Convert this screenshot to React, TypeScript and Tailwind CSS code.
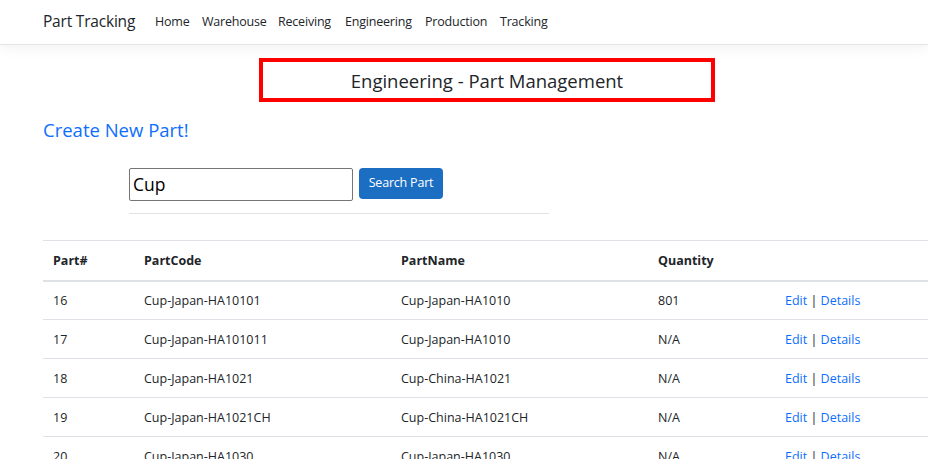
import React from "react";

const rows = [
  { id: "16", code: "Cup-Japan-HA10101", name: "Cup-Japan-HA1010", qty: "801" },
  { id: "17", code: "Cup-Japan-HA101011", name: "Cup-Japan-HA1010", qty: "N/A" },
  { id: "18", code: "Cup-Japan-HA1021", name: "Cup-China-HA1021", qty: "N/A" },
  { id: "19", code: "Cup-Japan-HA1021CH", name: "Cup-China-HA1021CH", qty: "N/A" },
  { id: "20", code: "Cup-Japan-HA1030", name: "Cup-Japan-HA1030", qty: "N/A" },
];

const navLinks = [
  { label: "Home", w: "w-[47px]" },
  { label: "Warehouse", w: "w-[76px]" },
  { label: "Receiving", w: "w-[67px]" },
  { label: "Engineering", w: "w-[80px]" },
  { label: "Production", w: "w-[75px]" },
  { label: "Tracking", w: "w-[70px]" },
];

export default function App() {
  return (
    <div
      className="w-[928px] h-[459px] overflow-hidden bg-white text-[#212529]"
      style={{ fontFamily: '"Open Sans", "Noto Sans", sans-serif' }}
    >
      <nav className="h-[45px] border-b border-[#e5e5e5] shadow-[0_4px_12px_rgba(0,0,0,0.05)] flex items-center pl-[43px]">
        <span className="w-[112px] text-[15.5px] text-[#212529] whitespace-nowrap tracking-[-0.2px]">Part Tracking</span>
        <div className="flex items-center">
          {navLinks.map((l) => (
            <span key={l.label} className={`${l.w} text-[12.5px] text-[#212529] whitespace-nowrap tracking-[-0.2px]`}>
              {l.label}
            </span>
          ))}
        </div>
      </nav>

      <main className="w-[888px] ml-[43px]">
        <div className="mt-[13px] mx-auto w-[456px] h-[44px] border-4 border-[#ff0000] flex items-center justify-center">
          <span className="text-[18.5px] text-[#212529] tracking-[0px] pt-[1px]">Engineering - Part Management</span>
        </div>

        <div className="mt-[14px] h-[28px] flex items-center">
          <a className="text-[18.5px] text-[#0d6efd] tracking-[0px]">Create New Part!</a>
        </div>

        <div className="ml-[86px] mt-[24px] flex items-start">
          <div className="w-[224px] h-[33px] border border-[#767676] rounded-[2px] flex items-center pl-[3px]">
            <span className="text-[17.5px] text-black">Cup</span>
          </div>
          <button className="ml-[6px] w-[84px] h-[31px] bg-[#1b6ec2] rounded-[4px] text-white text-[12.5px] tracking-[-0.2px]">
            Search Part
          </button>
        </div>
        <div className="ml-[86px] mt-[12px] w-[420px] h-px bg-[#e3e3e3]" />

        <table className="mt-[26px] w-[888px] table-fixed border-collapse text-[12.5px]">
          <colgroup>
            <col className="w-[91px]" />
            <col className="w-[257px]" />
            <col className="w-[257px]" />
            <col className="w-[127px]" />
            <col className="w-[156px]" />
          </colgroup>
          <thead>
            <tr className="h-[40px] border-t border-b-2 border-[#dee2e6]">
              <th className="text-left pl-[10px] pt-[3px] font-bold">Part#</th>
              <th className="text-left pl-[10px] pt-[3px] font-bold">PartCode</th>
              <th className="text-left pl-[10px] pt-[3px] font-bold">PartName</th>
              <th className="text-left pl-[10px] pt-[3px] font-bold">Quantity</th>
              <th />
            </tr>
          </thead>
          <tbody>
            {rows.map((r) => (
              <tr key={r.id} className="h-[39px] border-b border-[#dee2e6]">
                <td className="pl-[10px] pt-[2px] whitespace-nowrap">{r.id}</td>
                <td className="pl-[10px] pt-[2px] whitespace-nowrap">{r.code}</td>
                <td className="pl-[10px] pt-[2px] whitespace-nowrap">{r.name}</td>
                <td className="pl-[10px] pt-[2px] whitespace-nowrap">{r.qty}</td>
                <td className="pl-[10px] pt-[2px] whitespace-nowrap">
                  <a className="text-[#0d6efd]">Edit</a> | <a className="text-[#0d6efd]">Details</a>
                </td>
              </tr>
            ))}
          </tbody>
        </table>
      </main>
    </div>
  );
}
